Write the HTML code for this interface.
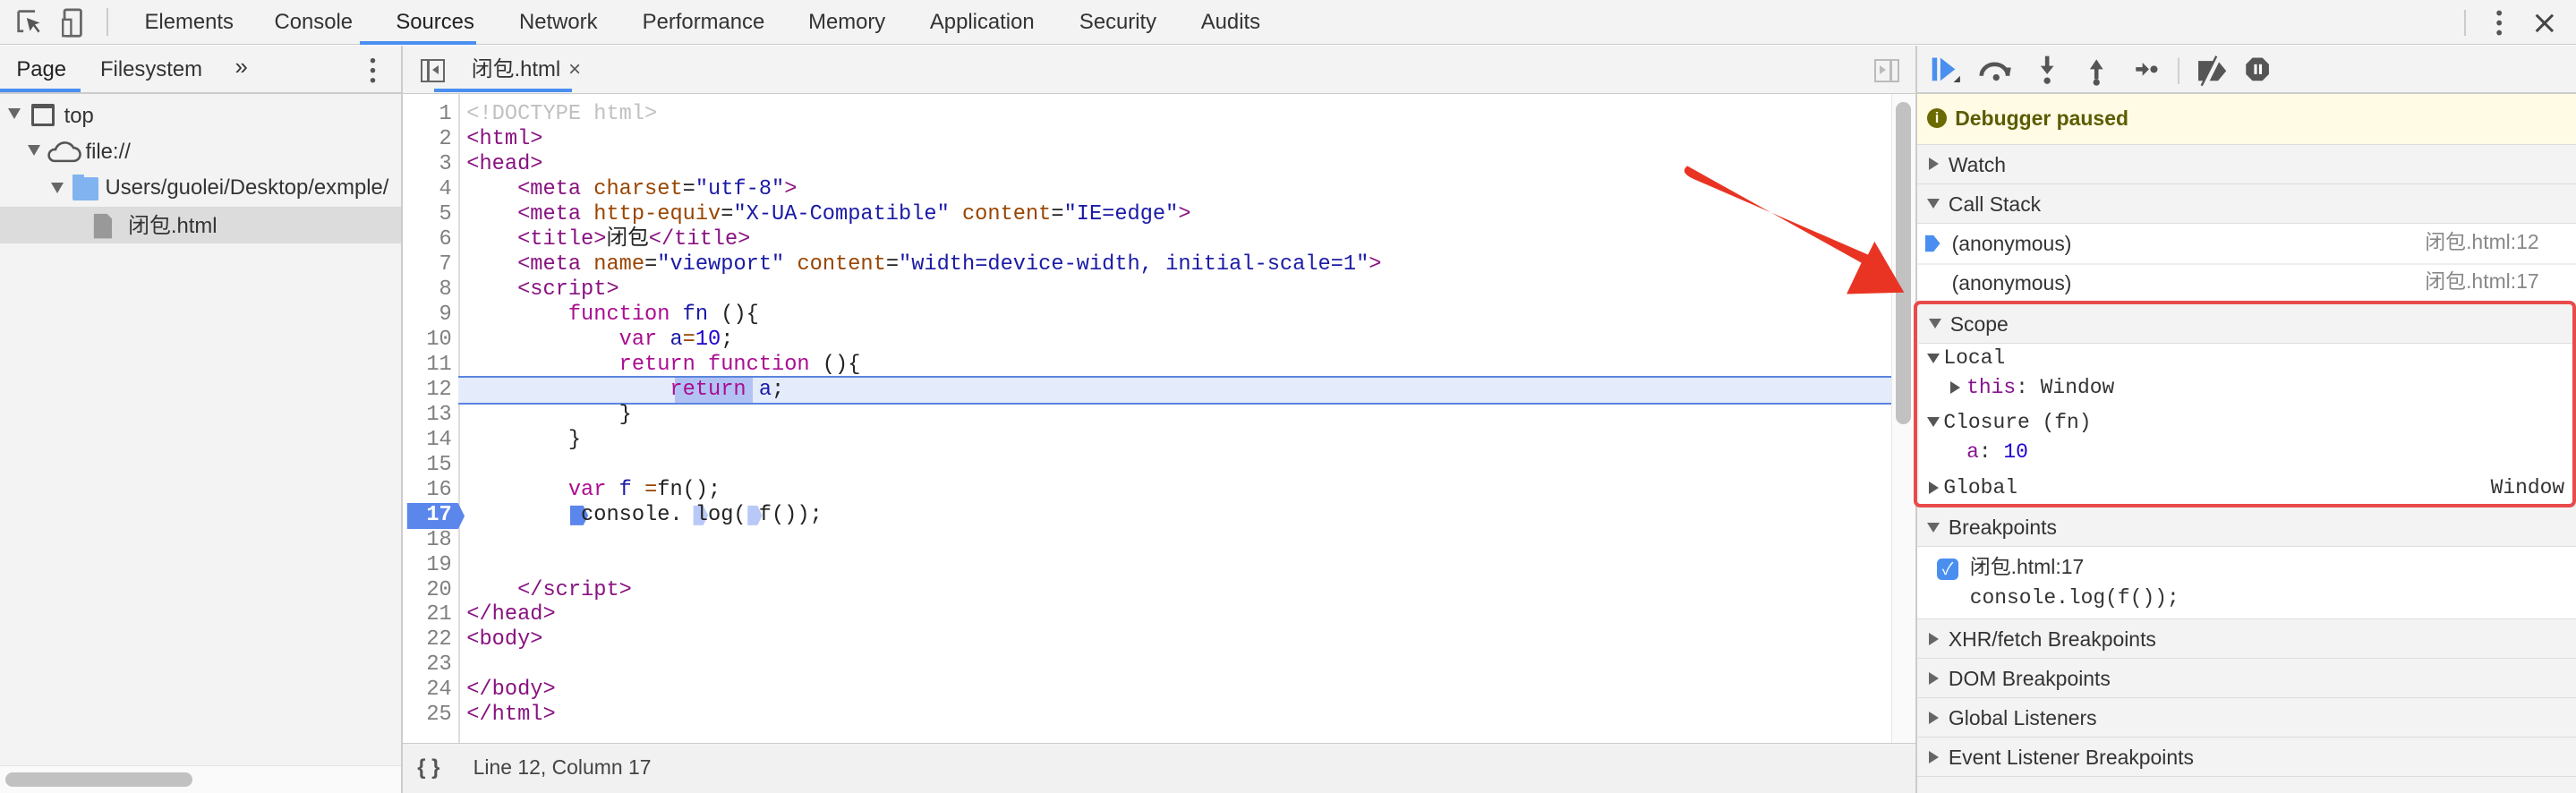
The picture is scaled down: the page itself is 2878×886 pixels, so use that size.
<!DOCTYPE html>
<html><head><meta charset="utf-8"><style>
*{margin:0;padding:0;box-sizing:border-box}
html,body{width:2878px;height:886px;overflow:hidden;background:#fff}
#w{width:1568px;height:483px;zoom:1.8355;position:relative;font-family:"Liberation Sans","Noto Sans CJK SC",sans-serif;font-size:13px;color:#333;overflow:hidden}
.a{position:absolute;white-space:pre;line-height:15px}
.m{font-family:"Liberation Mono","Noto Sans CJK SC",monospace;font-size:12.9px}
.tg{color:#881280}.at{color:#994500}.av{color:#1a1aa6}.kw{color:#aa0d91}.nm{color:#1c00cf}.dt{color:#c0c0c0}.vr{color:#1a1aa6}
.sec{position:absolute;left:1167px;width:401px;height:24px;background:#f3f3f3;border-bottom:1px solid #ddd;font-size:12.5px;color:#333}
.sec span{position:absolute;left:19px;top:5px;line-height:15px}
.tri{position:absolute;left:7px;top:8px;width:0;height:0}
.tr{border-top:4px solid transparent;border-bottom:4px solid transparent;border-left:6px solid #666}
.td{border-left:4px solid transparent;border-right:4px solid transparent;border-top:6px solid #666;top:9px;left:6px}
</style></head><body><div id="w">
<div class="a" style="left:0;top:0;width:1568px;height:27px;background:#f3f3f3;border-bottom:1px solid #ccc"></div>
<svg class="a" style="left:9px;top:5px" width="46" height="18" viewBox="0 0 46 18"><path d="M2 2h10M2 2v12h3" stroke="#666" fill="none" stroke-width="1.5"/><path d="M7 6l8 3-3 1 3 4-1 1-3-4-2 3z" fill="#555"/><rect x="30" y="1" width="10" height="16" rx="1" fill="none" stroke="#666" stroke-width="1.5"/><rect x="29" y="7" width="5" height="10" fill="#f3f3f3" stroke="#666" stroke-width="1.3"/></svg>
<div class="a" style="left:65px;top:5px;width:1px;height:17px;background:#ccc"></div>
<div class="a" style="left:88px;top:6px">Elements</div>
<div class="a" style="left:167px;top:6px">Console</div>
<div class="a" style="left:241px;top:6px;color:#222">Sources</div>
<div class="a" style="left:219px;top:25px;width:71px;height:2px;background:#4a8ff0"></div>
<div class="a" style="left:316px;top:6px">Network</div>
<div class="a" style="left:391px;top:6px">Performance</div>
<div class="a" style="left:492px;top:6px">Memory</div>
<div class="a" style="left:566px;top:6px">Application</div>
<div class="a" style="left:657px;top:6px">Security</div>
<div class="a" style="left:731px;top:6px">Audits</div>
<div class="a" style="left:1500px;top:6px;width:1px;height:16px;background:#ccc"></div>
<svg class="a" style="left:1516px;top:5px" width="10" height="18"><circle cx="5" cy="3" r="1.6" fill="#555"/><circle cx="5" cy="9" r="1.6" fill="#555"/><circle cx="5" cy="15" r="1.6" fill="#555"/></svg>
<svg class="a" style="left:1542px;top:7px" width="14" height="14"><path d="M2 2l10 10M12 2L2 12" stroke="#444" stroke-width="1.6"/></svg>

<div class="a" style="left:0;top:28px;width:244px;height:455px;background:#f3f3f3"></div>
<div class="a" style="left:0;top:56px;width:244px;height:1px;background:#ccc"></div>
<div class="a" style="left:10px;top:35px;color:#222">Page</div>
<div class="a" style="left:0;top:54px;width:49px;height:2px;background:#4a8ff0"></div>
<div class="a" style="left:61px;top:35px">Filesystem</div>
<div class="a" style="left:143px;top:34px;font-size:14px">»</div>
<svg class="a" style="left:224px;top:35px" width="6" height="16"><circle cx="3" cy="2" r="1.5" fill="#555"/><circle cx="3" cy="8" r="1.5" fill="#555"/><circle cx="3" cy="14" r="1.5" fill="#555"/></svg>
<div class="a" style="left:0;top:126px;width:244px;height:22px;background:#dcdcdc"></div>
<div class="a" style="left:5px;top:66px;border-left:4px solid transparent;border-right:4px solid transparent;border-top:7px solid #666"></div>
<div class="a" style="left:19px;top:63px;width:14px;height:14px;border:2px solid #555;border-top-width:3px;border-radius:1px"></div>
<div class="a" style="left:39px;top:63px">top</div>
<div class="a" style="left:17px;top:88px;border-left:4px solid transparent;border-right:4px solid transparent;border-top:7px solid #666"></div>
<svg class="a" style="left:28px;top:85px" width="22" height="14"><path d="M5 13h12a4 4 0 0 0 0-8 6 6 0 0 0-11 1 3.5 3.5 0 0 0-1 7z" fill="none" stroke="#555" stroke-width="1.4"/></svg>
<div class="a" style="left:52px;top:85px">file://</div>
<div class="a" style="left:31px;top:111px;border-left:4px solid transparent;border-right:4px solid transparent;border-top:7px solid #666"></div>
<div class="a" style="left:44px;top:108px;width:16px;height:14px;background:#80b3f0;border-radius:1px"></div>
<div class="a" style="left:44px;top:106px;width:7px;height:3px;background:#80b3f0"></div>
<div class="a" style="left:64px;top:107px">Users/guolei/Desktop/exmple/</div>
<svg class="a" style="left:56px;top:129px" width="13" height="17"><path d="M1 1h8l3 3v12H1z" fill="#999"/></svg>
<div class="a" style="left:78px;top:130px">闭包.html</div>
<div class="a" style="left:0;top:466px;width:244px;height:17px;background:#fafafa;border-top:1px solid #e5e5e5"></div>
<div class="a" style="left:3px;top:470px;width:114px;height:9px;background:#c1c1c1;border-radius:5px"></div>
<div class="a" style="left:244px;top:28px;width:1px;height:455px;background:#ccc"></div>

<div class="a" style="left:245px;top:28px;width:921px;height:29px;background:#f3f3f3;border-bottom:1px solid #ccc"></div>
<div class="a" style="left:256px;top:36px;width:15px;height:14px;border:1.5px solid #666"></div>
<div class="a" style="left:260px;top:36px;width:1.5px;height:14px;background:#666"></div>
<div class="a" style="left:263px;top:40px;border-top:3px solid transparent;border-bottom:3px solid transparent;border-right:4px solid #666"></div>
<div class="a" style="left:287px;top:35px;color:#333">闭包.html</div>
<div class="a" style="left:346px;top:35px;color:#555;font-size:13px">×</div>
<div class="a" style="left:264px;top:54px;width:84px;height:2px;background:#4a8ff0"></div>
<div class="a" style="left:1141px;top:36px;width:15px;height:14px;border:1.5px solid #bbb"></div>
<div class="a" style="left:1150px;top:36px;width:1.5px;height:14px;background:#bbb"></div>
<div class="a" style="left:1144px;top:40px;border-top:3px solid transparent;border-bottom:3px solid transparent;border-left:4px solid #bbb"></div>

<div class="a" style="left:279px;top:57px;width:1px;height:395px;background:#ddd"></div>
<div class="a" style="left:279px;top:229px;width:872px;height:17px;background:#e4ebfb;border-top:1.5px solid #5a85e0;border-bottom:1.5px solid #5a85e0"></div>
<div class="a" style="left:411px;top:230px;width:47px;height:15px;background:#b2c3f3"></div>
<svg class="a" style="left:247px;top:306px" width="38" height="16"><path d="M1 0h31l4 8-4 8H1z" fill="#5b86ec"/></svg>
<div class="a m" style="left:244px;top:62px;width:31px;text-align:right;color:#808080;line-height:15.25px">1
2
3
4
5
6
7
8
9
10
11
12
13
14
15
16
<b style="color:#fff">17</b>
18
19
20
21
22
23
24
25</div>
<svg class="a" style="left:347px;top:307px" width="170" height="14"><path d="M0 1h8l3 6-3 6H0z" fill="#5b86ec"/><path d="M75 1h6l3 6-3 6h-6z" fill="#b9c9f7"/><path d="M108 1h6l3 6-3 6h-6z" fill="#b9c9f7"/></svg>
<div class="a m" style="left:284px;top:62px;line-height:15.25px;color:#222"><span class="dt">&lt;!DOCTYPE html&gt;</span>
<span class="tg">&lt;html&gt;</span>
<span class="tg">&lt;head&gt;</span>
    <span class="tg">&lt;meta </span><span class="at">charset</span>=<span class="av">"utf-8"</span><span class="tg">&gt;</span>
    <span class="tg">&lt;meta </span><span class="at">http-equiv</span>=<span class="av">"X-UA-Compatible"</span> <span class="at">content</span>=<span class="av">"IE=edge"</span><span class="tg">&gt;</span>
    <span class="tg">&lt;title&gt;</span>闭包<span class="tg">&lt;/title&gt;</span>
    <span class="tg">&lt;meta </span><span class="at">name</span>=<span class="av">"viewport"</span> <span class="at">content</span>=<span class="av">"width=device-width, initial-scale=1"</span><span class="tg">&gt;</span>
    <span class="tg">&lt;script&gt;</span>
        <span class="kw">function</span> <span class="vr">fn</span> (){
            <span class="kw">var</span> <span class="vr">a</span><span class="at">=</span><span class="nm">10</span>;
            <span class="kw">return</span> <span class="kw">function</span> (){
                <span class="kw">return</span> <span class="vr">a</span>;
            }
        }

        <span class="kw">var</span> <span class="vr">f</span> <span class="at">=</span>fn();
         console. log( f());


    <span class="tg">&lt;/script&gt;</span>
<span class="tg">&lt;/head&gt;</span>
<span class="tg">&lt;body&gt;</span>

<span class="tg">&lt;/body&gt;</span>
<span class="tg">&lt;/html&gt;</span></div>
<div class="a" style="left:1151px;top:57px;width:15px;height:395px;background:#fafafa;border-left:1px solid #e8e8e8"></div>
<div class="a" style="left:1154px;top:62px;width:9px;height:196px;background:#c1c1c1;border-radius:5px"></div>
<div class="a" style="left:245px;top:452px;width:921px;height:31px;background:#f1f1f1;border-top:1px solid #ccc"></div>
<div class="a" style="left:254px;top:460px;color:#555;font-weight:bold;font-size:13px">{ }</div>
<div class="a" style="left:288px;top:460px;color:#444;font-size:12.5px">Line 12, Column 17</div>

<div class="a" style="left:1166px;top:28px;width:1px;height:455px;background:#ccc"></div>
<div class="a" style="left:1167px;top:28px;width:401px;height:455px;background:#f3f3f3"></div>
<div class="a" style="left:1167px;top:56px;width:401px;height:1px;background:#ccc"></div>
<svg class="a" style="left:1174px;top:32px" width="230" height="22">
<rect x="2" y="3" width="3" height="14" fill="#4a8ff0"/><path d="M7 3l9 7-9 7z" fill="#4a8ff0"/><path d="M19 18v-4l-4 4z" fill="#444"/>
<path d="M32 14a8 7 0 0 1 16 0" fill="none" stroke="#555" stroke-width="2.5"/><path d="M45 9l5 0-1 5z" fill="#555"/><circle cx="41" cy="15" r="2" fill="#555"/>
<path d="M72 2v8" stroke="#555" stroke-width="2.5"/><path d="M68 8h8l-4 5z" fill="#555"/><circle cx="72" cy="17" r="2" fill="#555"/>
<path d="M102 9v7" stroke="#555" stroke-width="2.5"/><path d="M98 10h8l-4-6z" fill="#555"/><circle cx="102" cy="18" r="2" fill="#555"/>
<path d="M126 10h6" stroke="#555" stroke-width="2.5"/><path d="M130 6v8l4-4z" fill="#555"/><circle cx="137" cy="10" r="2.2" fill="#555"/>
<path d="M152 3v16" stroke="#ccc"/>
<path d="M164 5h12l5 6-5 6h-12z" fill="#555"/><path d="M168 20l9-18" stroke="#f3f3f3" stroke-width="2.5"/><path d="M166 20l9-18" stroke="#555" stroke-width="1.3"/>
<path d="M197 3h6l4 4v6l-4 4h-6l-4-4v-6z" fill="#555"/><rect x="198" y="7" width="1.7" height="6" fill="#fff"/><rect x="201" y="7" width="1.7" height="6" fill="#fff"/>
</svg>
<div class="a" style="left:1167px;top:57px;width:401px;height:31px;background:#fffbe5;border-bottom:1px solid #ddd"></div>
<div class="a" style="left:1173px;top:66px;width:12px;height:12px;border-radius:6px;background:#6a6a00;color:#fffbe5;font-size:9px;font-weight:bold;text-align:center;line-height:12px">i</div>
<div class="a" style="left:1190px;top:65px;color:#5c5c00;font-weight:bold;font-size:12.5px">Debugger paused</div>
<div class="sec" style="top:88px"><i class="tri tr"></i><span>Watch</span></div>
<div class="sec" style="top:112px"><i class="tri td"></i><span>Call Stack</span></div>
<div class="a" style="left:1167px;top:136px;width:401px;height:48px;background:#fff"></div>
<div class="a" style="left:1167px;top:160px;width:401px;height:1px;background:#eee"></div>
<svg class="a" style="left:1172px;top:142px" width="10" height="12"><path d="M0 1h5l4 5-4 5H0z" fill="#4a8ff0"/></svg>
<div class="a" style="left:1188px;top:141px;font-size:12.5px">(anonymous)</div>
<div class="a" style="left:1476px;top:140px;font-size:12.5px;color:#888">闭包.html:12</div>
<div class="a" style="left:1188px;top:165px;font-size:12.5px">(anonymous)</div>
<div class="a" style="left:1476px;top:164px;font-size:12.5px;color:#888">闭包.html:17</div>
<div class="sec" style="top:185px;left:1168px;width:399px"><i class="tri td"></i><span>Scope</span></div>
<div class="a" style="left:1168px;top:209px;width:399px;height:98px;background:#fff"></div>
<div class="a m" style="left:1183px;top:211px;font-size:12.5px">Local</div>
<div class="a" style="left:1173px;top:215px;border-left:4px solid transparent;border-right:4px solid transparent;border-top:6px solid #555"></div>
<div class="a" style="left:1187px;top:232px;border-top:4px solid transparent;border-bottom:4px solid transparent;border-left:6px solid #555"></div>
<div class="a m" style="left:1197px;top:229px;font-size:12.5px"><span style="color:#881391">this</span>: Window</div>
<div class="a" style="left:1173px;top:254px;border-left:4px solid transparent;border-right:4px solid transparent;border-top:6px solid #555"></div>
<div class="a m" style="left:1183px;top:250px;font-size:12.5px">Closure (fn)</div>
<div class="a m" style="left:1197px;top:268px;font-size:12.5px"><span style="color:#881391">a</span>: <span style="color:#1c00cf">10</span></div>
<div class="a" style="left:1174px;top:293px;border-top:4px solid transparent;border-bottom:4px solid transparent;border-left:6px solid #555"></div>
<div class="a m" style="left:1183px;top:290px;font-size:12.5px">Global</div>
<div class="a m" style="left:1516px;top:290px;font-size:12.5px">Window</div>
<div class="a" style="left:1165px;top:183px;width:403px;height:126px;border:2.5px solid #e94a4a;border-radius:4px"></div>
<div class="sec" style="top:309px"><i class="tri td"></i><span>Breakpoints</span></div>
<div class="a" style="left:1167px;top:333px;width:401px;height:44px;background:#fff;border-bottom:1px solid #ddd"></div>
<div class="a" style="left:1179px;top:340px;width:13px;height:13px;border-radius:3px;background:#4a8ff0;color:#fff;font-size:10px;text-align:center;line-height:13px">✓</div>
<div class="a" style="left:1199px;top:338px;font-size:12.5px">闭包.html:17</div>
<div class="a m" style="left:1199px;top:357px;font-size:12.5px">console.log(f());</div>
<div class="sec" style="top:377px"><i class="tri tr"></i><span>XHR/fetch Breakpoints</span></div>
<div class="sec" style="top:401px"><i class="tri tr"></i><span>DOM Breakpoints</span></div>
<div class="sec" style="top:425px"><i class="tri tr"></i><span>Global Listeners</span></div>
<div class="sec" style="top:449px"><i class="tri tr"></i><span>Event Listener Breakpoints</span></div>
<svg class="a" style="left:0;top:0" width="1568" height="483"><path d="M1027 101 L1133 160 L1124 179 L1159 178 L1141 147 L1137 155 L1031 109 Q1022 105 1027 101z" fill="#e93424"/></svg>
</div></body></html>
